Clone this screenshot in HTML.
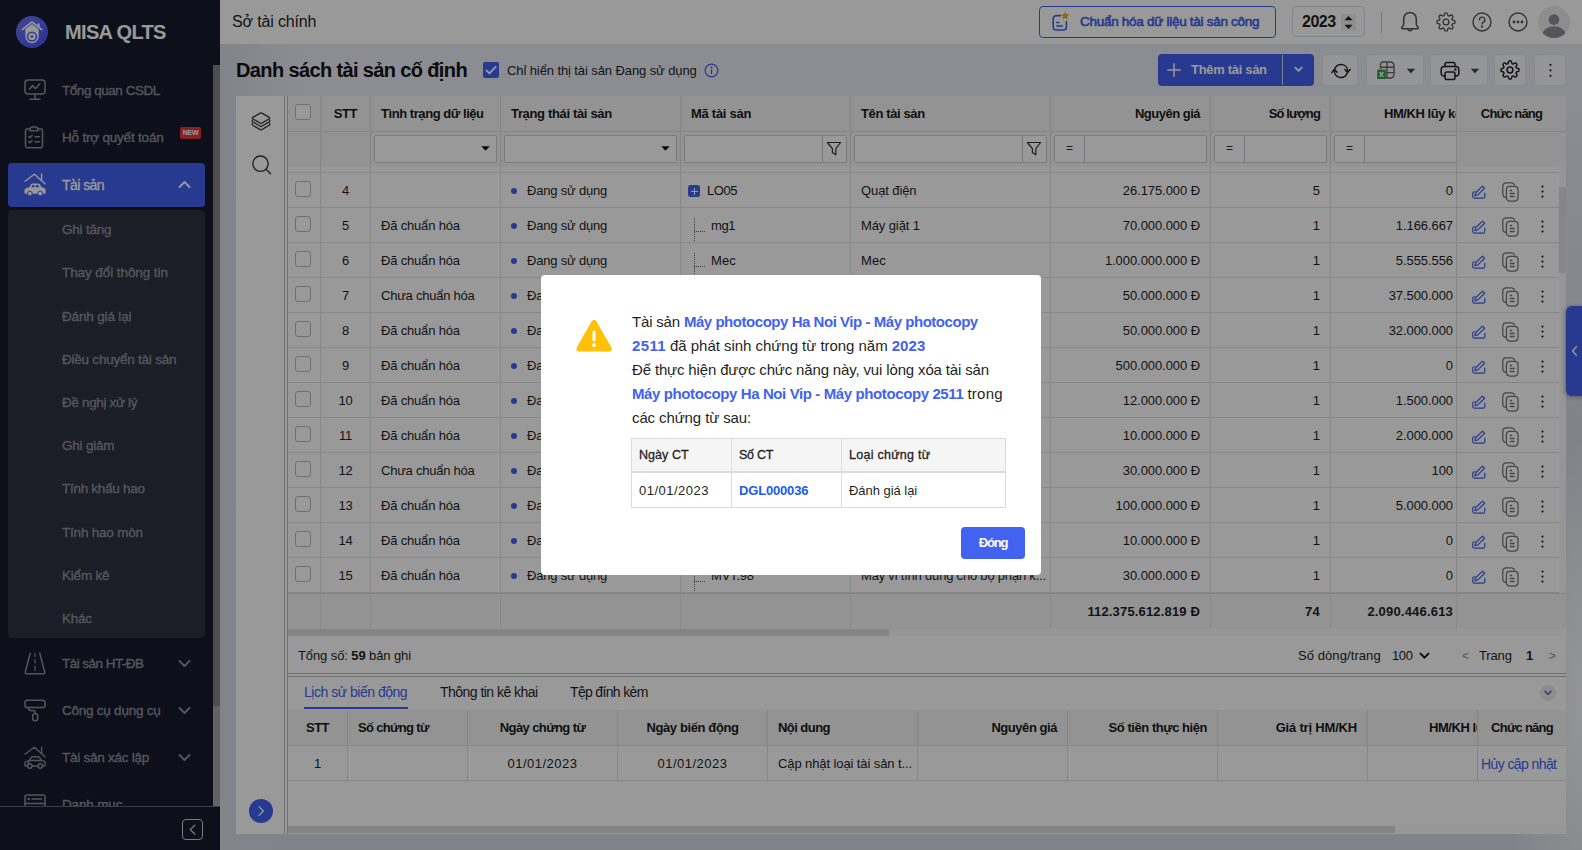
<!DOCTYPE html>
<html lang="vi">
<head>
<meta charset="utf-8">
<title>MISA QLTS - Danh sách tài sản cố định</title>
<style>
*{box-sizing:border-box;margin:0;padding:0}
html,body{width:1582px;height:850px;overflow:hidden}
body{position:relative;font-family:"Liberation Sans",Arial,sans-serif;font-size:13px;color:#1f1f1f;background:radial-gradient(ellipse 90px 260px at 1590px 700px,#fbfbfb 0,rgba(251,251,251,0) 100%),linear-gradient(to right,#d9dce6 225px,rgba(217,220,230,0) 300px),linear-gradient(to bottom,#e8ebf4 0,#e8ebf4 100px,#d7dbe5 420px)}
.abs{position:absolute}
svg{display:block;overflow:visible}
.nw{white-space:nowrap}
b,.b{font-weight:700}
.md{-webkit-text-stroke:.3px currentColor}
/* ---------- sidebar ---------- */
#sb{position:absolute;left:0;top:0;width:220px;height:850px;background:#161a2d;overflow:hidden}
#sb .logo{position:absolute;left:16px;top:16px;width:32px;height:32px;border-radius:50%;background:linear-gradient(140deg,#6b79f2,#4a4eff)}
#sb .brand{position:absolute;left:65px;top:20px;font-size:20px;font-weight:700;color:#fff;letter-spacing:-.7px;line-height:24px;white-space:nowrap}
.mi{position:absolute;left:8px;width:197px;height:44px;border-radius:4px;color:#8e909b;font-size:13.5px;white-space:nowrap}
.mi .t{position:absolute;left:54px;top:15px;line-height:16px;letter-spacing:-.5px;-webkit-text-stroke:.35px currentColor}
.mi .ic{position:absolute;left:15px;top:10px;width:24px;height:24px}
.mi .ar{position:absolute;left:170px;top:18px;width:13px;height:9px}
.mi.act{background:#4262f0;color:#fff}
#sub{position:absolute;left:8px;top:210px;width:197px;height:428px;background:#2e3142;border-radius:4px}
.si{position:absolute;left:62px;font-size:13.5px;color:#8e909b;line-height:16px;white-space:nowrap;letter-spacing:-.5px;-webkit-text-stroke:.35px currentColor}
#sbscroll{position:absolute;left:213px;top:65px;width:7px;height:741px;background:#a6a6a6}
#sbscroll i{position:absolute;left:0;top:0;width:7px;height:641px;background:#828282}
#sbfoot{position:absolute;left:0;top:806px;width:220px;height:44px;background:#161a2d;border-top:1px solid #62667a}
#sbfoot .cb{position:absolute;left:182px;top:12px;width:21px;height:21px;border:1px solid #cfcfcf;border-radius:4px}
.new{position:absolute;left:172px;top:12px;width:21px;height:12px;border-radius:2px;background:#e8353d;color:#fff;font-size:7px;font-weight:700;line-height:12px;text-align:center;letter-spacing:-.2px}
/* ---------- header ---------- */
#hd{position:absolute;left:220px;top:0;width:1362px;height:44px;background:#fff}
#hd .org{position:absolute;left:12px;top:12px;font-size:16px;line-height:20px;white-space:nowrap;letter-spacing:-.3px}
#hd .std{position:absolute;left:819px;top:6px;width:237px;height:32px;border:1px solid #4262f0;border-radius:4px;color:#4262f0;font-weight:400;font-size:13.5px;-webkit-text-stroke:.6px #4262f0}
#hd .std>span{position:absolute;left:40px;top:7px;line-height:16px;white-space:nowrap;letter-spacing:-.95px}
#hd .yr{position:absolute;left:1072px;top:6px;width:73px;height:31px;border:1px solid #dadce8;border-radius:4px;background:#fff}
#hd .yr>span{position:absolute;left:9px;top:6px;font-size:16px;font-weight:700;line-height:18px;letter-spacing:-.4px}
#hd .yr i{position:absolute;left:48px;top:7px;width:15px;height:17px;background:#efefef}
#hd .sep{position:absolute;left:1161px;top:12px;width:1px;height:21px;background:#c4c4c4}
/* ---------- toolbar ---------- */
#ttl{position:absolute;left:236px;top:58px;font-size:20px;font-weight:700;line-height:24px;white-space:nowrap;color:#111}
#chk{position:absolute;left:483px;top:62px;width:16px;height:16px;border-radius:2px;background:#4262f0}
#chkl{position:absolute;left:507px;top:63px;line-height:15px;white-space:nowrap;letter-spacing:-.2px;font-size:13px}
.tb{position:absolute;top:54px;height:32px;border-radius:4px;background:#f8f9fc;border:1px solid #e3e5ec}
#add{position:absolute;left:1158px;top:54px;width:156px;height:32px;border-radius:4px;background:#4262f0;color:#fff}
#add>span{position:absolute;left:33px;top:8px;font-weight:700;font-size:13px;line-height:16px;white-space:nowrap;letter-spacing:-.35px}
#add i{position:absolute;left:124px;top:1px;width:1px;height:30px;background:#cfd6f5}
/* ---------- left panel ---------- */
#lp{position:absolute;left:236px;top:96px;width:48px;height:738px;background:#fff}
#sp1{position:absolute;left:284px;top:96px;width:4px;height:738px;background:#fff;border-left:1px solid #bdbdbd;border-right:1px solid #bdbdbd}
/* ---------- grid ---------- */
#g{position:absolute;left:288px;top:96px;width:1278px;height:738px;background:#fff;overflow:hidden}
.hc{position:absolute;top:0;height:36px;line-height:35px;font-weight:700;padding:0 10px;border-right:1px solid #e0e0e0;border-bottom:1px solid #e0e0e0;white-space:nowrap;overflow:hidden;letter-spacing:-.45px;color:#1a1a1a}
.fc{position:absolute;top:36px;height:35px;border-right:1px solid #e0e0e0}
.fi{position:absolute;top:3px;height:28px;border:1px solid #cdcdcd;border-radius:1.5px;background:#fff}
.r{position:absolute;left:0;width:1271px;height:35px;border-bottom:1px solid #e3e3e3}
.c{position:absolute;top:0;height:34px;line-height:35px;padding:0 10px;border-right:1px solid #e3e3e3;white-space:nowrap;overflow:hidden;letter-spacing:-.2px}
.c.rt{text-align:right;padding-right:10px;letter-spacing:-.07px}
.c.ct{text-align:center;padding:0}
.cb16{position:absolute;left:7px;top:8px;width:16px;height:16px;border:1px solid #b9b9b9;border-radius:3px;background:#fff}
.dot{position:absolute;left:10px;top:15px;width:6px;height:6px;border-radius:50%;background:#4262f0}
.tv{position:absolute;left:13px;top:10px;width:0;height:25px;border-left:1px dotted #666}
.th{position:absolute;left:13px;top:23px;width:11px;height:0;border-top:1px dotted #666}
</style>
<style>
.plus{position:absolute;left:7px;top:12px;width:12px;height:12px;border-radius:2.5px;background:#4262f0}
.plus:before{content:"";position:absolute;left:2.5px;top:5.5px;width:7px;height:1px;background:#fff}
.plus:after{content:"";position:absolute;left:5.5px;top:2.5px;width:1px;height:7px;background:#fff}
#modal{position:absolute;left:541px;top:275px;width:500px;height:300px;background:#fff;border-radius:4px}
#modal .msg{position:absolute;left:91px;top:35px;font-size:15px;color:#1f1f1f}
#modal .ln{height:24px;line-height:24px;white-space:nowrap;letter-spacing:-.2px}
#modal .ln b{color:#4262f0}
#modal .mt{position:absolute;left:90px;top:163px;width:375px;height:70px;border:1px solid #d9dbe4;}
.mh{position:absolute;top:0;height:34px;line-height:33px;background:#f5f5f5;border-right:1px solid #dfe0e6;border-bottom:2px solid #d9dbe4;padding-left:7px;font-size:12.5px;white-space:nowrap;-webkit-text-stroke:.3px #1f1f1f;letter-spacing:-.2px}
.mc{position:absolute;top:34px;height:34px;line-height:35px;border-right:1px solid #d9dbe4;padding-left:7px;font-size:13px;white-space:nowrap;letter-spacing:-.1px}
#modal .close{position:absolute;left:420px;top:252px;width:64px;height:32px;border-radius:4px;background:#4262f0;color:#fff;font-weight:700;font-size:13px;line-height:32px;text-align:center;letter-spacing:-.6px}
</style>
</head>
<body>
<!-- ================= SIDEBAR ================= -->
<div id="sb">
  <div class="logo">
    <svg width="32" height="32" viewBox="0 0 32 32">
      <path d="M6.3 13.6 L16 5.8 L25.7 13.6" fill="none" stroke="#fff" stroke-width="1.7" stroke-linecap="round" stroke-linejoin="round"/>
      <path d="M21.4 7.6h2.2v3.6l-2.2-1.8z" fill="#fff"/>
      <path d="M9.3 13.2 L16 8 L22.7 13.2 V20.5 A6.7 6.7 0 0 1 9.3 20.5 Z" fill="#fff"/>
      <circle cx="16" cy="20.6" r="5.2" fill="#5560f0"/>
      <circle cx="16" cy="20.6" r="3.7" fill="#fff"/>
      <circle cx="16" cy="20.6" r="1.4" fill="#5560f0"/>
    </svg>
  </div>
  <div class="brand"><span style="letter-spacing:-0.66px">MISA QLTS</span></div>

  <div class="mi" style="top:68px">
    <svg class="abs" style="left:16px;top:11px" width="22" height="22" viewBox="0 0 22 22" fill="none" stroke="#8e909b" stroke-width="1.5" stroke-linecap="round" stroke-linejoin="round">
      <rect x="1" y="1" width="20" height="14" rx="3"/><path d="M11 15v5M6 20.3h10"/><path d="M5.4 10.2l3.2-3.6 2.900000000000001 3.1 4.3-4.9" stroke-width="1.6"/>
    </svg>
    <span class="t"><span style="letter-spacing:-0.46px">Tổng quan CSDL</span></span>
  </div>

  <div class="mi" style="top:115px">
    <svg class="abs" style="left:16px;top:10px" width="20" height="24" viewBox="0 0 20 24" fill="none" stroke="#8e909b" stroke-width="1.5" stroke-linecap="round" stroke-linejoin="round">
      <path d="M6 4H3.2A1.7 1.7 0 0 0 1.5 5.700000000000001V21A1.7 1.7 0 0 0 3.2 22.7H16.8A1.7 1.7 0 0 0 18.5 21V5.7A1.7 1.7 0 0 0 16.8 4H14"/>
      <path d="M6 5.800000000000001V3.6a1 1 0 0 1 1-1h1.3a1.8 1.8 0 0 1 3.4 0H13a1 1 0 0 1 1 1v2.2z"/>
      <path d="M4.800000000000001 11.6l1.2 1.2 2-2.2M11 11.8h4.5M4.8 16.6l1.2 1.2 2-2.2M11 16.8h4.5"/>
    </svg>
    <span class="t"><span style="letter-spacing:-0.20px">Hỗ trợ quyết toán</span></span>
    <span class="new">NEW</span>
  </div>

  <div class="mi act" style="top:163px">
    <svg class="abs" style="left:16px;top:10px" width="22" height="24" viewBox="0 0 22 24">
      <path d="M1 8.2 L10.4 1.2 L21 10.8" fill="none" stroke="#fff" stroke-width="1.4" stroke-linecap="round" stroke-linejoin="round"/>
      <path d="M17.6 1.2V7" fill="none" stroke="#fff" stroke-width="1.4" stroke-linecap="round"/>
      <path d="M5.2 14.6 L7 11.4 Q7.5 10.5 8.6 10.5 H14 Q15.2 10.5 15.900000000000002 11.5 L17.8 14.3 Q21.6 14.8 21.6 17.4 V19.6 Q21.6 20.8 20.4 20.8 H1.7 Q0.5 20.8 0.5 19.6 V17.6 Q0.5 15 5.2 14.6 Z" fill="#fff"/>
      <circle cx="5.8" cy="20.6" r="2.4" fill="#fff" stroke="#4262f0" stroke-width="1"/>
      <circle cx="16.2" cy="20.6" r="2.4" fill="#fff" stroke="#4262f0" stroke-width="1"/>
      <path d="M7.3 14.3l1.2-2.2h2v2.2zM11.8 12.1h2.2l1.6 2.2h-3.8z" fill="#4262f0"/>
    </svg>
    <span class="t" style="top:14px;font-size:14px;-webkit-text-stroke:.3px currentColor"><span style="letter-spacing:-0.55px">Tài sản</span></span>
    <svg class="ar" style="top:17px" viewBox="0 0 13 9" fill="none" stroke="#fff" stroke-width="1.9" stroke-linecap="round" stroke-linejoin="round"><path d="M1.5 7L6.5 2l5 5"/></svg>
  </div>

  <div id="sub"></div>
  <div class="si" style="top:222px"><span style="letter-spacing:-0.22px">Ghi tăng</span></div>
  <div class="si" style="top:265px"><span style="letter-spacing:-0.08px">Thay đổi thông tin</span></div>
  <div class="si" style="top:309px"><span style="letter-spacing:-0.16px">Đánh giá lại</span></div>
  <div class="si" style="top:352px"><span style="letter-spacing:-0.23px">Điều chuyển tài sản</span></div>
  <div class="si" style="top:395px"><span style="letter-spacing:-0.34px">Đề nghị xử lý</span></div>
  <div class="si" style="top:438px"><span style="letter-spacing:-0.22px">Ghi giảm</span></div>
  <div class="si" style="top:481px"><span style="letter-spacing:-0.28px">Tính khấu hao</span></div>
  <div class="si" style="top:525px"><span style="letter-spacing:-0.21px">Tính hao mòn</span></div>
  <div class="si" style="top:568px"><span style="letter-spacing:-0.21px">Kiểm kê</span></div>
  <div class="si" style="top:611px"><span style="letter-spacing:-0.26px">Khác</span></div>

  <div class="mi" style="top:641px">
    <svg class="abs" style="left:16px;top:11px" width="22" height="23" viewBox="0 0 22 23" fill="none" stroke="#8e909b" stroke-width="1.5" stroke-linecap="round" stroke-linejoin="round">
      <path d="M6.2 1.2 L1.4 19.6 Q1 21.8 2.6 21.8 H19.4 Q21 21.8 20.6 19.6 L15.8 1.2"/>
      <path d="M11 1.5v3M11 7.5v3.600000000000001M11 14.2v4.2" stroke-width="1.2"/>
    </svg>
    <span class="t"><span style="letter-spacing:-0.54px">Tài sản HT-ĐB</span></span>
    <svg class="ar" viewBox="0 0 13 9" fill="none" stroke="#8e909b" stroke-width="1.9" stroke-linecap="round" stroke-linejoin="round"><path d="M1.5 2l5 5 5-5"/></svg>
  </div>

  <div class="mi" style="top:688px">
    <svg class="abs" style="left:16px;top:11px" width="22" height="23" viewBox="0 0 22 23" fill="none" stroke="#8e909b" stroke-width="1.5" stroke-linecap="round" stroke-linejoin="round">
      <rect x="1" y="1.2" width="20" height="7.4" rx="2.4"/>
      <path d="M4.2 8.8 Q4.4 11.4 7 11.6 L10 11.8 Q11.2 12 11.2 13.2 V14.6"/>
      <rect x="8.7" y="14.8" width="5" height="7" rx="2.2"/>
    </svg>
    <span class="t"><span style="letter-spacing:-0.24px">Công cụ dụng cụ</span></span>
    <svg class="ar" viewBox="0 0 13 9" fill="none" stroke="#8e909b" stroke-width="1.9" stroke-linecap="round" stroke-linejoin="round"><path d="M1.5 2l5 5 5-5"/></svg>
  </div>

  <div class="mi" style="top:735px">
    <svg class="abs" style="left:16px;top:11px" width="22" height="24" viewBox="0 0 22 24" fill="none" stroke="#8e909b" stroke-width="1.4" stroke-linecap="round" stroke-linejoin="round">
      <path d="M1 8.2 L10.4 1.2 L21 10.8M17.6 1.2V7"/>
      <path d="M5.2 14.6 L7 11.6 Q7.5 10.7 8.6 10.7 H13.8 Q15 10.7 15.7 11.7 L17.6 14.4 Q21.2 14.9 21.2 17.4 V19 Q21.2 20 20.2 20 H18.6M13.8 20H8.2M3.4 20H1.9 Q0.9 20 0.9 19 V17.6 Q0.9 15.1 5.2 14.6 Z"/>
      <path d="M5.6 14.5H17.4"/>
      <circle cx="5.8" cy="20" r="2.2"/><circle cx="16.2" cy="20" r="2.2"/>
    </svg>
    <span class="t"><span style="letter-spacing:-0.26px">Tài sản xác lập</span></span>
    <svg class="ar" viewBox="0 0 13 9" fill="none" stroke="#8e909b" stroke-width="1.9" stroke-linecap="round" stroke-linejoin="round"><path d="M1.5 2l5 5 5-5"/></svg>
  </div>

  <div class="mi" style="top:782px">
    <svg class="abs" style="left:16px;top:12px" width="22" height="20" viewBox="0 0 22 20" fill="none" stroke="#8e909b" stroke-width="1.5" stroke-linecap="round" stroke-linejoin="round">
      <rect x="1" y="1" width="20" height="17" rx="2"/><path d="M1 9.5h20"/><path d="M8 5h9.5"/><circle cx="4.6" cy="5" r=".6" fill="#8e909b"/>
    </svg>
    <span class="t"><span style="letter-spacing:-0.15px">Danh mục</span></span>
  </div>

  <div id="sbscroll"><i></i></div>
  <div id="sbfoot"><div class="cb"><svg width="19" height="19" viewBox="0 0 19 19" fill="none" stroke="#cfcfcf" stroke-width="1.3" stroke-linecap="round" stroke-linejoin="round"><path d="M11.8 5.2L7.2 9.6l4.6 4.400000000000001"/></svg></div></div>
</div>
<!-- ================= HEADER ================= -->
<div id="hd">
  <div class="org"><span style="letter-spacing:-0.15px">Sở tài chính</span></div>
  <div class="std">
    <svg class="abs" style="left:11px;top:4px" width="20" height="22" viewBox="0 0 20 22" fill="none" stroke="#4262f0" stroke-width="1.6" stroke-linecap="round" stroke-linejoin="round">
      <path d="M9.5 4.6H5.2A3 3 0 0 0 2.2 7.6V16A3 3 0 0 0 5.2 19H12.4A3 3 0 0 0 15.4 16V10.5"/>
      <path d="M5.8 11.5h2M5.8 15h5.6"/>
      <path d="M14.2 0.6l1.25 2.6 2.85.4-2.05 2 .5 2.85-2.55-1.35-2.55 1.35.5-2.85-2.05-2 2.85-.4z" fill="#f5a623" stroke="none"/>
    </svg>
    <span><span style="letter-spacing:-0.28px">Chuẩn hóa dữ liệu tài sản công</span></span>
  </div>
  <div class="yr"><span><span style="letter-spacing:-0.50px">2023</span></span><i></i>
    <svg class="abs" style="left:50px;top:8px" width="11" height="15" viewBox="0 0 9 13"><path d="M1 4.5L4.5 .8 8 4.5zM1 8.5L4.5 12.2 8 8.5z" fill="#222"/></svg>
  </div>
  <div class="sep"></div>
  <!-- bell -->
  <svg class="abs" style="left:1180px;top:11px" width="20" height="23" viewBox="0 0 20 23" fill="none" stroke="#555" stroke-width="1.5" stroke-linecap="round" stroke-linejoin="round">
    <path d="M10 1.5c-3.700000000000001 0-6.300000000000001 2.8-6.300000000000001 6.5v5.2c0 1.2-.6 2.100000000000001-1.6 2.900000000000001-.7.6-.3 1.7.6 1.7h14.600000000000001c.9 0 1.3-1.1.6-1.7-1-.8-1.6-1.7-1.6-2.900000000000001V8c0-3.700000000000001-2.600000000000001-6.5-6.300000000000001-6.5z"/>
    <path d="M7.8 18.2a2.3 2.3 0 0 0 4.4 0"/>
  </svg>
  <!-- gear -->
  <svg class="abs" style="left:1216px;top:12px" width="20" height="20" viewBox="0 0 24 24" fill="none" stroke="#555" stroke-width="1.6" stroke-linecap="round" stroke-linejoin="round">
    <circle cx="12" cy="12" r="3.5"/>
    <path d="M19.4 15a1.65 1.65 0 0 0 .33 1.82l.06.06a2 2 0 1 1-2.830000000000001 2.830000000000001l-.06-.06a1.65 1.65 0 0 0-1.82-.33 1.65 1.65 0 0 0-1 1.51V21a2 2 0 1 1-4 0v-.09A1.65 1.65 0 0 0 9 19.4a1.65 1.65 0 0 0-1.82.33l-.06.06a2 2 0 1 1-2.830000000000001-2.830000000000001l.06-.06a1.65 1.65 0 0 0 .33-1.82 1.65 1.65 0 0 0-1.51-1H3a2 2 0 1 1 0-4h.09A1.65 1.65 0 0 0 4.6 9a1.65 1.65 0 0 0-.33-1.82l-.06-.06a2 2 0 1 1 2.830000000000001-2.830000000000001l.06.06a1.65 1.65 0 0 0 1.82.33H9a1.65 1.65 0 0 0 1-1.51V3a2 2 0 1 1 4 0v.09a1.65 1.65 0 0 0 1 1.51 1.65 1.65 0 0 0 1.82-.33l.06-.06a2 2 0 1 1 2.830000000000001 2.830000000000001l-.06.06a1.65 1.65 0 0 0-.33 1.82V9a1.65 1.65 0 0 0 1.51 1H21a2 2 0 1 1 0 4h-.09a1.65 1.65 0 0 0-1.51 1z"/>
  </svg>
  <!-- help -->
  <svg class="abs" style="left:1252px;top:12px" width="20" height="20" viewBox="0 0 20 20" fill="none" stroke="#555" stroke-width="1.4" stroke-linecap="round" stroke-linejoin="round">
    <circle cx="10" cy="10" r="9"/><path d="M7.4 7.800000000000001a2.7 2.7 0 1 1 3.8 2.5c-.8.4-1.2.9-1.2 1.8"/><circle cx="10" cy="14.6" r=".5" fill="#555"/>
  </svg>
  <!-- more -->
  <svg class="abs" style="left:1288px;top:12px" width="20" height="20" viewBox="0 0 20 20" fill="none" stroke="#555" stroke-width="1.4">
    <circle cx="10" cy="10" r="9"/><circle cx="6" cy="10" r=".7" fill="#555"/><circle cx="10" cy="10" r=".7" fill="#555"/><circle cx="14" cy="10" r=".7" fill="#555"/>
  </svg>
  <!-- avatar -->
  <svg class="abs" style="left:1318px;top:6px" width="32" height="32" viewBox="0 0 32 32">
    <defs><clipPath id="avc"><circle cx="16" cy="16" r="16"/></clipPath></defs>
    <circle cx="16" cy="16" r="16" fill="#ececec"/>
    <g clip-path="url(#avc)" fill="#8e8e96"><circle cx="16" cy="13.6" r="5.3"/><ellipse cx="16" cy="28.5" rx="11.5" ry="8.3"/></g>
  </svg>
</div>

<!-- ================= TITLE / TOOLBAR ================= -->
<div id="ttl"><span style="letter-spacing:-0.63px">Danh sách tài sản cố định</span></div>
<div id="chk"><svg width="16" height="16" viewBox="0 0 16 16" fill="none" stroke="#fff" stroke-width="1.9" stroke-linecap="round" stroke-linejoin="round"><path d="M3.4 8.4l3 3 6.2-6.6"/></svg></div>
<div id="chkl"><span style="letter-spacing:-0.10px">Chỉ hiển thị tài sản Đang sử dụng</span></div>
<svg class="abs" style="left:704px;top:63px" width="15" height="15" viewBox="0 0 15 15" fill="none" stroke="#4262f0" stroke-width="1.2" stroke-linecap="round"><circle cx="7.5" cy="7.5" r="6.4"/><path d="M7.5 6.8v3.8"/><circle cx="7.5" cy="4.5" r=".4" fill="#4262f0"/></svg>

<div id="add">
  <svg class="abs" style="left:9px;top:9px" width="14" height="14" viewBox="0 0 14 14" fill="none" stroke="#fff" stroke-width="1.5" stroke-linecap="round"><path d="M7 .8v12.4M.8 7h12.4"/></svg>
  <span><span style="letter-spacing:-0.31px">Thêm tài sản</span></span><i></i>
  <svg class="abs" style="left:136px;top:12px" width="9" height="7" viewBox="0 0 11 8" fill="none" stroke="#fff" stroke-width="2.2" stroke-linecap="round" stroke-linejoin="round"><path d="M1.6 1.8l3.9 3.9 3.9-3.9"/></svg>
</div>
<div class="tb" style="left:1322px;width:36px">
  <svg class="abs" style="left:8px;top:8px" width="20" height="16" viewBox="0 0 20 16" fill="none" stroke="#222" stroke-width="1.5" stroke-linecap="round" stroke-linejoin="round">
    <path d="M3.9 5.6A6.6 6.6 0 0 1 16.6 8.6"/><path d="M13.9 6.6l2.7 2.8 2.5-3"/>
    <path d="M16.1 10.4A6.6 6.6 0 0 1 3.4 7.4"/><path d="M.9 9.4l2.5-3 2.7 2.8"/>
  </svg>
</div>
<div class="tb" style="left:1366px;width:58px">
  <svg class="abs" style="left:10px;top:6px" width="18" height="19" viewBox="0 0 18 19" fill="none" stroke="#666" stroke-width="1.4" stroke-linejoin="round">
    <path d="M5 1h8.5A3.5 3.5 0 0 1 17 4.5v9A3.5 3.5 0 0 1 13.5 17H8M3.5 8V3.5"/>
    <path d="M3.5 6.3H17M9 11.6h8M10 1v16M3.5 3.5A2.5 2.5 0 0 1 6 1"/>
    <rect x=".2" y="8.6" width="8.6" height="9.4" fill="#2e9e4f" stroke="none"/>
    <path d="M2.6 11l3.8 4.800000000000001M6.4 11l-3.8 4.800000000000001" stroke="#fff" stroke-width="1.3"/>
  </svg>
  <svg class="abs" style="left:39px;top:13px" width="10" height="6" viewBox="0 0 10 6"><path d="M.8 .8h8.4L5 5.4z" fill="#38446e"/></svg>
</div>
<div class="tb" style="left:1430px;width:58px">
  <svg class="abs" style="left:9px;top:6px" width="20" height="20" viewBox="0 0 20 20" fill="none" stroke="#222" stroke-width="1.5" stroke-linecap="round" stroke-linejoin="round">
    <path d="M5 5.4V3.2A1.7 1.7 0 0 1 6.7 1.5h6.6A1.7 1.7 0 0 1 15 3.2v2.2"/>
    <path d="M5 15H3.6A2.4 2.4 0 0 1 1.2 12.6V8A2.6 2.6 0 0 1 3.8 5.4h12.4A2.6 2.6 0 0 1 18.8 8v4.6A2.4 2.4 0 0 1 16.4 15H15"/>
    <rect x="5" y="11" width="10" height="7.6" rx="1.8"/><circle cx="15.4" cy="8.4" r=".5" fill="#222"/>
  </svg>
  <svg class="abs" style="left:39px;top:13px" width="10" height="6" viewBox="0 0 10 6"><path d="M.8 .8h8.4L5 5.4z" fill="#38446e"/></svg>
</div>
<div class="tb" style="left:1494px;width:32px">
  <svg class="abs" style="left:5px;top:5px" width="20" height="20" viewBox="0 0 24 24" fill="none" stroke="#222" stroke-width="1.8" stroke-linecap="round" stroke-linejoin="round">
    <circle cx="12" cy="12" r="3.5"/>
    <path d="M19.4 15a1.65 1.65 0 0 0 .33 1.82l.06.06a2 2 0 1 1-2.830000000000001 2.830000000000001l-.06-.06a1.65 1.65 0 0 0-1.82-.33 1.65 1.65 0 0 0-1 1.51V21a2 2 0 1 1-4 0v-.09A1.65 1.65 0 0 0 9 19.4a1.65 1.65 0 0 0-1.82.33l-.06.06a2 2 0 1 1-2.830000000000001-2.830000000000001l.06-.06a1.65 1.65 0 0 0 .33-1.82 1.65 1.65 0 0 0-1.51-1H3a2 2 0 1 1 0-4h.09A1.65 1.65 0 0 0 4.6 9a1.65 1.65 0 0 0-.33-1.82l-.06-.06a2 2 0 1 1 2.830000000000001-2.830000000000001l.06.06a1.65 1.65 0 0 0 1.82.33H9a1.65 1.65 0 0 0 1-1.51V3a2 2 0 1 1 4 0v.09a1.65 1.65 0 0 0 1 1.51 1.65 1.65 0 0 0 1.82-.33l.06-.06a2 2 0 1 1 2.830000000000001 2.830000000000001l-.06.06a1.65 1.65 0 0 0-.33 1.82V9a1.65 1.65 0 0 0 1.51 1H21a2 2 0 1 1 0 4h-.09a1.65 1.65 0 0 0-1.51 1z"/>
  </svg>
</div>
<div class="tb" style="left:1534px;width:32px">
  <svg class="abs" style="left:14px;top:8px" width="3" height="15" viewBox="0 0 3 15" fill="#222"><circle cx="1.5" cy="1.8" r="1.1"/><circle cx="1.5" cy="7.3" r="1.1"/><circle cx="1.5" cy="12.8" r="1.1"/></svg>
</div>

<!-- ================= LEFT PANEL ================= -->
<div id="lp">
  <svg class="abs" style="left:15px;top:16px" width="20" height="20" viewBox="0 0 20 20" fill="none" stroke="#3a3a3a" stroke-width="1.3" stroke-linecap="round" stroke-linejoin="round">
    <path d="M9.2 1.1Q10 .7 10.8 1.1L18.300000000000001 5.4Q19.2 6.1 18.300000000000001 6.8L10.8 11.1Q10 11.5 9.2 11.1L1.7 6.8Q.8 6.1 1.7 5.4Z"/>
    <path d="M1.4 8.2Q.9 9.3 1.8 9.9L9.2 14.2Q10 14.6 10.8 14.2L18.2 9.9Q19.1 9.3 18.6 8.2"/>
    <path d="M1.4 11.6Q.9 12.7 1.8 13.3L9.2 17.6Q10 18 10.8 17.6L18.2 13.3Q19.1 12.7 18.6 11.6"/>
  </svg>
  <svg class="abs" style="left:15px;top:59px" width="20" height="20" viewBox="0 0 20 20" fill="none" stroke="#3a3a3a" stroke-width="1.4" stroke-linecap="round"><circle cx="9.5" cy="8.7" r="7.7"/><path d="M15 14.2l4.6 4.6"/></svg>
  <div class="abs" style="left:13px;top:703px;width:24px;height:24px;border-radius:50%;background:#4262f0">
    <svg class="abs" style="left:8px;top:6px" width="8" height="12" viewBox="0 0 8 12" fill="none" stroke="#fff" stroke-width="1.3" stroke-linecap="round" stroke-linejoin="round"><path d="M2 1.6l4.4 4.4L2 10.4"/></svg>
  </div>
</div>
<div id="sp1"></div>
<!-- ================= GRID ================= -->
<div id="g">
<div class="abs" style="left:0;top:71px;width:1271px;height:426px;overflow:hidden;background:#fff">
<div class="r" style="top:-29px">
<div class="c " style="left:0px;width:33px"><i class="cb16"></i></div>
<div class="c ct" style="left:33px;width:50px">3</div>
<div class="c " style="left:83px;width:130px"><span style="letter-spacing:-0.18px">Đã chuẩn hóa</span></div>
<div class="c " style="left:213px;width:180px"><i class="dot"></i><span style="padding-left:16px"><span style="letter-spacing:-0.19px">Đang sử dụng</span></span></div>
<div class="c " style="left:393px;width:170px"><span style="padding-left:20px"></span></div>
<div class="c " style="left:563px;width:200px"></div>
<div class="c rt" style="left:763px;width:160px"></div>
<div class="c rt" style="left:923px;width:120px"></div>
<div class="c rt" style="left:1043px;width:125px;padding-right:3px;border-right:0"></div>
</div>
<div class="r" style="top:6px">
<div class="c " style="left:0px;width:33px"><i class="cb16"></i></div>
<div class="c ct" style="left:33px;width:50px">4</div>
<div class="c " style="left:83px;width:130px"></div>
<div class="c " style="left:213px;width:180px"><i class="dot"></i><span style="padding-left:16px"><span style="letter-spacing:-0.19px">Đang sử dụng</span></span></div>
<div class="c " style="left:393px;width:170px"><i class="plus"></i><span style="padding-left:16px"><span style="letter-spacing:-0.47px">LO05</span></span></div>
<div class="c " style="left:563px;width:200px"><span style="letter-spacing:-0.10px">Quạt điện</span></div>
<div class="c rt" style="left:763px;width:160px">26.175.000 Đ</div>
<div class="c rt" style="left:923px;width:120px">5</div>
<div class="c rt" style="left:1043px;width:125px;padding-right:3px;border-right:0">0</div>
</div>
<div class="r" style="top:41px">
<div class="c " style="left:0px;width:33px"><i class="cb16"></i></div>
<div class="c ct" style="left:33px;width:50px">5</div>
<div class="c " style="left:83px;width:130px"><span style="letter-spacing:-0.18px">Đã chuẩn hóa</span></div>
<div class="c " style="left:213px;width:180px"><i class="dot"></i><span style="padding-left:16px"><span style="letter-spacing:-0.19px">Đang sử dụng</span></span></div>
<div class="c " style="left:393px;width:170px"><i class="tv"></i><i class="th"></i><span style="padding-left:20px"><span style="letter-spacing:-0.35px">mg1</span></span></div>
<div class="c " style="left:563px;width:200px"><span style="letter-spacing:-0.11px">Máy giặt 1</span></div>
<div class="c rt" style="left:763px;width:160px">70.000.000 Đ</div>
<div class="c rt" style="left:923px;width:120px">1</div>
<div class="c rt" style="left:1043px;width:125px;padding-right:3px;border-right:0">1.166.667</div>
</div>
<div class="r" style="top:76px">
<div class="c " style="left:0px;width:33px"><i class="cb16"></i></div>
<div class="c ct" style="left:33px;width:50px">6</div>
<div class="c " style="left:83px;width:130px"><span style="letter-spacing:-0.18px">Đã chuẩn hóa</span></div>
<div class="c " style="left:213px;width:180px"><i class="dot"></i><span style="padding-left:16px"><span style="letter-spacing:-0.19px">Đang sử dụng</span></span></div>
<div class="c " style="left:393px;width:170px"><i class="tv"></i><i class="th"></i><span style="padding-left:20px"><span style="letter-spacing:0.12px">Mec</span></span></div>
<div class="c " style="left:563px;width:200px"><span style="letter-spacing:0.12px">Mec</span></div>
<div class="c rt" style="left:763px;width:160px">1.000.000.000 Đ</div>
<div class="c rt" style="left:923px;width:120px">1</div>
<div class="c rt" style="left:1043px;width:125px;padding-right:3px;border-right:0">5.555.556</div>
</div>
<div class="r" style="top:111px">
<div class="c " style="left:0px;width:33px"><i class="cb16"></i></div>
<div class="c ct" style="left:33px;width:50px">7</div>
<div class="c " style="left:83px;width:130px"><span style="letter-spacing:-0.24px">Chưa chuẩn hóa</span></div>
<div class="c " style="left:213px;width:180px"><i class="dot"></i><span style="padding-left:16px"><span style="letter-spacing:-0.19px">Đang sử dụng</span></span></div>
<div class="c " style="left:393px;width:170px"><i class="tv"></i><i class="th"></i><span style="padding-left:20px">MPT2511</span></div>
<div class="c " style="left:563px;width:200px">Máy photocopy 2511</div>
<div class="c rt" style="left:763px;width:160px">50.000.000 Đ</div>
<div class="c rt" style="left:923px;width:120px">1</div>
<div class="c rt" style="left:1043px;width:125px;padding-right:3px;border-right:0">37.500.000</div>
</div>
<div class="r" style="top:146px">
<div class="c " style="left:0px;width:33px"><i class="cb16"></i></div>
<div class="c ct" style="left:33px;width:50px">8</div>
<div class="c " style="left:83px;width:130px"><span style="letter-spacing:-0.18px">Đã chuẩn hóa</span></div>
<div class="c " style="left:213px;width:180px"><i class="dot"></i><span style="padding-left:16px"><span style="letter-spacing:-0.19px">Đang sử dụng</span></span></div>
<div class="c " style="left:393px;width:170px"><i class="tv"></i><i class="th"></i><span style="padding-left:20px">MPT.01</span></div>
<div class="c " style="left:563px;width:200px">Máy photocopy Ha Noi Vip</div>
<div class="c rt" style="left:763px;width:160px">50.000.000 Đ</div>
<div class="c rt" style="left:923px;width:120px">1</div>
<div class="c rt" style="left:1043px;width:125px;padding-right:3px;border-right:0">32.000.000</div>
</div>
<div class="r" style="top:181px">
<div class="c " style="left:0px;width:33px"><i class="cb16"></i></div>
<div class="c ct" style="left:33px;width:50px">9</div>
<div class="c " style="left:83px;width:130px"><span style="letter-spacing:-0.18px">Đã chuẩn hóa</span></div>
<div class="c " style="left:213px;width:180px"><i class="dot"></i><span style="padding-left:16px"><span style="letter-spacing:-0.19px">Đang sử dụng</span></span></div>
<div class="c " style="left:393px;width:170px"><i class="tv"></i><i class="th"></i><span style="padding-left:20px">OTO.05</span></div>
<div class="c " style="left:563px;width:200px">Xe ô tô 7 chỗ</div>
<div class="c rt" style="left:763px;width:160px">500.000.000 Đ</div>
<div class="c rt" style="left:923px;width:120px">1</div>
<div class="c rt" style="left:1043px;width:125px;padding-right:3px;border-right:0">0</div>
</div>
<div class="r" style="top:216px">
<div class="c " style="left:0px;width:33px"><i class="cb16"></i></div>
<div class="c ct" style="left:33px;width:50px">10</div>
<div class="c " style="left:83px;width:130px"><span style="letter-spacing:-0.18px">Đã chuẩn hóa</span></div>
<div class="c " style="left:213px;width:180px"><i class="dot"></i><span style="padding-left:16px"><span style="letter-spacing:-0.19px">Đang sử dụng</span></span></div>
<div class="c " style="left:393px;width:170px"><i class="tv"></i><i class="th"></i><span style="padding-left:20px">MVT.12</span></div>
<div class="c " style="left:563px;width:200px">Máy vi tính để bàn</div>
<div class="c rt" style="left:763px;width:160px">12.000.000 Đ</div>
<div class="c rt" style="left:923px;width:120px">1</div>
<div class="c rt" style="left:1043px;width:125px;padding-right:3px;border-right:0">1.500.000</div>
</div>
<div class="r" style="top:251px">
<div class="c " style="left:0px;width:33px"><i class="cb16"></i></div>
<div class="c ct" style="left:33px;width:50px">11</div>
<div class="c " style="left:83px;width:130px"><span style="letter-spacing:-0.18px">Đã chuẩn hóa</span></div>
<div class="c " style="left:213px;width:180px"><i class="dot"></i><span style="padding-left:16px"><span style="letter-spacing:-0.19px">Đang sử dụng</span></span></div>
<div class="c " style="left:393px;width:170px"><i class="tv"></i><i class="th"></i><span style="padding-left:20px">MVT.15</span></div>
<div class="c " style="left:563px;width:200px">Máy in laser</div>
<div class="c rt" style="left:763px;width:160px">10.000.000 Đ</div>
<div class="c rt" style="left:923px;width:120px">1</div>
<div class="c rt" style="left:1043px;width:125px;padding-right:3px;border-right:0">2.000.000</div>
</div>
<div class="r" style="top:286px">
<div class="c " style="left:0px;width:33px"><i class="cb16"></i></div>
<div class="c ct" style="left:33px;width:50px">12</div>
<div class="c " style="left:83px;width:130px"><span style="letter-spacing:-0.24px">Chưa chuẩn hóa</span></div>
<div class="c " style="left:213px;width:180px"><i class="dot"></i><span style="padding-left:16px"><span style="letter-spacing:-0.19px">Đang sử dụng</span></span></div>
<div class="c " style="left:393px;width:170px"><i class="tv"></i><i class="th"></i><span style="padding-left:20px">MVT.33</span></div>
<div class="c " style="left:563px;width:200px">Máy chiếu</div>
<div class="c rt" style="left:763px;width:160px">30.000.000 Đ</div>
<div class="c rt" style="left:923px;width:120px">1</div>
<div class="c rt" style="left:1043px;width:125px;padding-right:3px;border-right:0">100</div>
</div>
<div class="r" style="top:321px">
<div class="c " style="left:0px;width:33px"><i class="cb16"></i></div>
<div class="c ct" style="left:33px;width:50px">13</div>
<div class="c " style="left:83px;width:130px"><span style="letter-spacing:-0.18px">Đã chuẩn hóa</span></div>
<div class="c " style="left:213px;width:180px"><i class="dot"></i><span style="padding-left:16px"><span style="letter-spacing:-0.19px">Đang sử dụng</span></span></div>
<div class="c " style="left:393px;width:170px"><i class="tv"></i><i class="th"></i><span style="padding-left:20px">MVT.47</span></div>
<div class="c " style="left:563px;width:200px">Máy điều hòa</div>
<div class="c rt" style="left:763px;width:160px">100.000.000 Đ</div>
<div class="c rt" style="left:923px;width:120px">1</div>
<div class="c rt" style="left:1043px;width:125px;padding-right:3px;border-right:0">5.000.000</div>
</div>
<div class="r" style="top:356px">
<div class="c " style="left:0px;width:33px"><i class="cb16"></i></div>
<div class="c ct" style="left:33px;width:50px">14</div>
<div class="c " style="left:83px;width:130px"><span style="letter-spacing:-0.18px">Đã chuẩn hóa</span></div>
<div class="c " style="left:213px;width:180px"><i class="dot"></i><span style="padding-left:16px"><span style="letter-spacing:-0.19px">Đang sử dụng</span></span></div>
<div class="c " style="left:393px;width:170px"><i class="tv"></i><i class="th"></i><span style="padding-left:20px">MVT.76</span></div>
<div class="c " style="left:563px;width:200px">Máy quét</div>
<div class="c rt" style="left:763px;width:160px">10.000.000 Đ</div>
<div class="c rt" style="left:923px;width:120px">1</div>
<div class="c rt" style="left:1043px;width:125px;padding-right:3px;border-right:0">0</div>
</div>
<div class="r" style="top:391px">
<div class="c " style="left:0px;width:33px"><i class="cb16"></i></div>
<div class="c ct" style="left:33px;width:50px">15</div>
<div class="c " style="left:83px;width:130px"><span style="letter-spacing:-0.18px">Đã chuẩn hóa</span></div>
<div class="c " style="left:213px;width:180px"><i class="dot"></i><span style="padding-left:16px"><span style="letter-spacing:-0.19px">Đang sử dụng</span></span></div>
<div class="c " style="left:393px;width:170px"><i class="tv"></i><i class="th"></i><span style="padding-left:20px">MVT.98</span></div>
<div class="c " style="left:563px;width:200px">Máy vi tính dùng cho bộ phận k...</div>
<div class="c rt" style="left:763px;width:160px">30.000.000 Đ</div>
<div class="c rt" style="left:923px;width:120px">1</div>
<div class="c rt" style="left:1043px;width:125px;padding-right:3px;border-right:0">0</div>
</div>
</div>
<div class="abs" style="left:1168px;top:71px;width:103px;height:426px;overflow:hidden;background:#fff;border-left:1px solid #dedede">
<div class="abs" style="left:0;top:-29px;width:103px;height:35px;border-bottom:1px solid #dedede"><svg class="abs" style="left:15px;top:12px" width="14" height="14" viewBox="0 0 15 15" fill="none" stroke="#4262f0" stroke-width="1.25" stroke-linecap="round" stroke-linejoin="round"><path d="M11.2 1.2l2.3 2.3-7.3 7.1-3 .8.7-3.1z"/><path d="M3.2 7.2H2.6A1.8 1.8 0 0 0 .8 9v3.2A1.8 1.8 0 0 0 2.6 14h9.3a1.8 1.8 0 0 0 1.8-1.8V8.6"/></svg><svg class="abs" style="left:45px;top:9px" width="17" height="20" viewBox="0 0 17 20" fill="none" stroke="#757575" stroke-width="1.25" stroke-linecap="round" stroke-linejoin="round"><path d="M4.4 15.4H4A3.2 3.2 0 0 1 .8 12.2V4A3.2 3.2 0 0 1 4 .8h5.6a3.2 3.2 0 0 1 3 2.2"/><rect x="4.4" y="4.4" width="11.6" height="14.6" rx="3.4"/><path d="M7.8 8.6h2.4M7.8 11.5h4.800000000000001M7.8 14.4h4.800000000000001" stroke-width="1.5" stroke-linecap="butt"/></svg><svg class="abs" style="left:84px;top:12px" width="3" height="13" viewBox="0 0 3 13" fill="#1f1f1f"><circle cx="1.5" cy="1.6" r="1.05"/><circle cx="1.5" cy="6.6" r="1.05"/><circle cx="1.5" cy="11.6" r="1.05"/></svg></div>
<div class="abs" style="left:0;top:6px;width:103px;height:35px;border-bottom:1px solid #dedede"><svg class="abs" style="left:15px;top:12px" width="14" height="14" viewBox="0 0 15 15" fill="none" stroke="#4262f0" stroke-width="1.25" stroke-linecap="round" stroke-linejoin="round"><path d="M11.2 1.2l2.3 2.3-7.3 7.1-3 .8.7-3.1z"/><path d="M3.2 7.2H2.6A1.8 1.8 0 0 0 .8 9v3.2A1.8 1.8 0 0 0 2.6 14h9.3a1.8 1.8 0 0 0 1.8-1.8V8.6"/></svg><svg class="abs" style="left:45px;top:9px" width="17" height="20" viewBox="0 0 17 20" fill="none" stroke="#757575" stroke-width="1.25" stroke-linecap="round" stroke-linejoin="round"><path d="M4.4 15.4H4A3.2 3.2 0 0 1 .8 12.2V4A3.2 3.2 0 0 1 4 .8h5.6a3.2 3.2 0 0 1 3 2.2"/><rect x="4.4" y="4.4" width="11.6" height="14.6" rx="3.4"/><path d="M7.8 8.6h2.4M7.8 11.5h4.800000000000001M7.8 14.4h4.800000000000001" stroke-width="1.5" stroke-linecap="butt"/></svg><svg class="abs" style="left:84px;top:12px" width="3" height="13" viewBox="0 0 3 13" fill="#1f1f1f"><circle cx="1.5" cy="1.6" r="1.05"/><circle cx="1.5" cy="6.6" r="1.05"/><circle cx="1.5" cy="11.6" r="1.05"/></svg></div>
<div class="abs" style="left:0;top:41px;width:103px;height:35px;border-bottom:1px solid #dedede"><svg class="abs" style="left:15px;top:12px" width="14" height="14" viewBox="0 0 15 15" fill="none" stroke="#4262f0" stroke-width="1.25" stroke-linecap="round" stroke-linejoin="round"><path d="M11.2 1.2l2.3 2.3-7.3 7.1-3 .8.7-3.1z"/><path d="M3.2 7.2H2.6A1.8 1.8 0 0 0 .8 9v3.2A1.8 1.8 0 0 0 2.6 14h9.3a1.8 1.8 0 0 0 1.8-1.8V8.6"/></svg><svg class="abs" style="left:45px;top:9px" width="17" height="20" viewBox="0 0 17 20" fill="none" stroke="#757575" stroke-width="1.25" stroke-linecap="round" stroke-linejoin="round"><path d="M4.4 15.4H4A3.2 3.2 0 0 1 .8 12.2V4A3.2 3.2 0 0 1 4 .8h5.6a3.2 3.2 0 0 1 3 2.2"/><rect x="4.4" y="4.4" width="11.6" height="14.6" rx="3.4"/><path d="M7.8 8.6h2.4M7.8 11.5h4.800000000000001M7.8 14.4h4.800000000000001" stroke-width="1.5" stroke-linecap="butt"/></svg><svg class="abs" style="left:84px;top:12px" width="3" height="13" viewBox="0 0 3 13" fill="#1f1f1f"><circle cx="1.5" cy="1.6" r="1.05"/><circle cx="1.5" cy="6.6" r="1.05"/><circle cx="1.5" cy="11.6" r="1.05"/></svg></div>
<div class="abs" style="left:0;top:76px;width:103px;height:35px;border-bottom:1px solid #dedede"><svg class="abs" style="left:15px;top:12px" width="14" height="14" viewBox="0 0 15 15" fill="none" stroke="#4262f0" stroke-width="1.25" stroke-linecap="round" stroke-linejoin="round"><path d="M11.2 1.2l2.3 2.3-7.3 7.1-3 .8.7-3.1z"/><path d="M3.2 7.2H2.6A1.8 1.8 0 0 0 .8 9v3.2A1.8 1.8 0 0 0 2.6 14h9.3a1.8 1.8 0 0 0 1.8-1.8V8.6"/></svg><svg class="abs" style="left:45px;top:9px" width="17" height="20" viewBox="0 0 17 20" fill="none" stroke="#757575" stroke-width="1.25" stroke-linecap="round" stroke-linejoin="round"><path d="M4.4 15.4H4A3.2 3.2 0 0 1 .8 12.2V4A3.2 3.2 0 0 1 4 .8h5.6a3.2 3.2 0 0 1 3 2.2"/><rect x="4.4" y="4.4" width="11.6" height="14.6" rx="3.4"/><path d="M7.8 8.6h2.4M7.8 11.5h4.800000000000001M7.8 14.4h4.800000000000001" stroke-width="1.5" stroke-linecap="butt"/></svg><svg class="abs" style="left:84px;top:12px" width="3" height="13" viewBox="0 0 3 13" fill="#1f1f1f"><circle cx="1.5" cy="1.6" r="1.05"/><circle cx="1.5" cy="6.6" r="1.05"/><circle cx="1.5" cy="11.6" r="1.05"/></svg></div>
<div class="abs" style="left:0;top:111px;width:103px;height:35px;border-bottom:1px solid #dedede"><svg class="abs" style="left:15px;top:12px" width="14" height="14" viewBox="0 0 15 15" fill="none" stroke="#4262f0" stroke-width="1.25" stroke-linecap="round" stroke-linejoin="round"><path d="M11.2 1.2l2.3 2.3-7.3 7.1-3 .8.7-3.1z"/><path d="M3.2 7.2H2.6A1.8 1.8 0 0 0 .8 9v3.2A1.8 1.8 0 0 0 2.6 14h9.3a1.8 1.8 0 0 0 1.8-1.8V8.6"/></svg><svg class="abs" style="left:45px;top:9px" width="17" height="20" viewBox="0 0 17 20" fill="none" stroke="#757575" stroke-width="1.25" stroke-linecap="round" stroke-linejoin="round"><path d="M4.4 15.4H4A3.2 3.2 0 0 1 .8 12.2V4A3.2 3.2 0 0 1 4 .8h5.6a3.2 3.2 0 0 1 3 2.2"/><rect x="4.4" y="4.4" width="11.6" height="14.6" rx="3.4"/><path d="M7.8 8.6h2.4M7.8 11.5h4.800000000000001M7.8 14.4h4.800000000000001" stroke-width="1.5" stroke-linecap="butt"/></svg><svg class="abs" style="left:84px;top:12px" width="3" height="13" viewBox="0 0 3 13" fill="#1f1f1f"><circle cx="1.5" cy="1.6" r="1.05"/><circle cx="1.5" cy="6.6" r="1.05"/><circle cx="1.5" cy="11.6" r="1.05"/></svg></div>
<div class="abs" style="left:0;top:146px;width:103px;height:35px;border-bottom:1px solid #dedede"><svg class="abs" style="left:15px;top:12px" width="14" height="14" viewBox="0 0 15 15" fill="none" stroke="#4262f0" stroke-width="1.25" stroke-linecap="round" stroke-linejoin="round"><path d="M11.2 1.2l2.3 2.3-7.3 7.1-3 .8.7-3.1z"/><path d="M3.2 7.2H2.6A1.8 1.8 0 0 0 .8 9v3.2A1.8 1.8 0 0 0 2.6 14h9.3a1.8 1.8 0 0 0 1.8-1.8V8.6"/></svg><svg class="abs" style="left:45px;top:9px" width="17" height="20" viewBox="0 0 17 20" fill="none" stroke="#757575" stroke-width="1.25" stroke-linecap="round" stroke-linejoin="round"><path d="M4.4 15.4H4A3.2 3.2 0 0 1 .8 12.2V4A3.2 3.2 0 0 1 4 .8h5.6a3.2 3.2 0 0 1 3 2.2"/><rect x="4.4" y="4.4" width="11.6" height="14.6" rx="3.4"/><path d="M7.8 8.6h2.4M7.8 11.5h4.800000000000001M7.8 14.4h4.800000000000001" stroke-width="1.5" stroke-linecap="butt"/></svg><svg class="abs" style="left:84px;top:12px" width="3" height="13" viewBox="0 0 3 13" fill="#1f1f1f"><circle cx="1.5" cy="1.6" r="1.05"/><circle cx="1.5" cy="6.6" r="1.05"/><circle cx="1.5" cy="11.6" r="1.05"/></svg></div>
<div class="abs" style="left:0;top:181px;width:103px;height:35px;border-bottom:1px solid #dedede"><svg class="abs" style="left:15px;top:12px" width="14" height="14" viewBox="0 0 15 15" fill="none" stroke="#4262f0" stroke-width="1.25" stroke-linecap="round" stroke-linejoin="round"><path d="M11.2 1.2l2.3 2.3-7.3 7.1-3 .8.7-3.1z"/><path d="M3.2 7.2H2.6A1.8 1.8 0 0 0 .8 9v3.2A1.8 1.8 0 0 0 2.6 14h9.3a1.8 1.8 0 0 0 1.8-1.8V8.6"/></svg><svg class="abs" style="left:45px;top:9px" width="17" height="20" viewBox="0 0 17 20" fill="none" stroke="#757575" stroke-width="1.25" stroke-linecap="round" stroke-linejoin="round"><path d="M4.4 15.4H4A3.2 3.2 0 0 1 .8 12.2V4A3.2 3.2 0 0 1 4 .8h5.6a3.2 3.2 0 0 1 3 2.2"/><rect x="4.4" y="4.4" width="11.6" height="14.6" rx="3.4"/><path d="M7.8 8.6h2.4M7.8 11.5h4.800000000000001M7.8 14.4h4.800000000000001" stroke-width="1.5" stroke-linecap="butt"/></svg><svg class="abs" style="left:84px;top:12px" width="3" height="13" viewBox="0 0 3 13" fill="#1f1f1f"><circle cx="1.5" cy="1.6" r="1.05"/><circle cx="1.5" cy="6.6" r="1.05"/><circle cx="1.5" cy="11.6" r="1.05"/></svg></div>
<div class="abs" style="left:0;top:216px;width:103px;height:35px;border-bottom:1px solid #dedede"><svg class="abs" style="left:15px;top:12px" width="14" height="14" viewBox="0 0 15 15" fill="none" stroke="#4262f0" stroke-width="1.25" stroke-linecap="round" stroke-linejoin="round"><path d="M11.2 1.2l2.3 2.3-7.3 7.1-3 .8.7-3.1z"/><path d="M3.2 7.2H2.6A1.8 1.8 0 0 0 .8 9v3.2A1.8 1.8 0 0 0 2.6 14h9.3a1.8 1.8 0 0 0 1.8-1.8V8.6"/></svg><svg class="abs" style="left:45px;top:9px" width="17" height="20" viewBox="0 0 17 20" fill="none" stroke="#757575" stroke-width="1.25" stroke-linecap="round" stroke-linejoin="round"><path d="M4.4 15.4H4A3.2 3.2 0 0 1 .8 12.2V4A3.2 3.2 0 0 1 4 .8h5.6a3.2 3.2 0 0 1 3 2.2"/><rect x="4.4" y="4.4" width="11.6" height="14.6" rx="3.4"/><path d="M7.8 8.6h2.4M7.8 11.5h4.800000000000001M7.8 14.4h4.800000000000001" stroke-width="1.5" stroke-linecap="butt"/></svg><svg class="abs" style="left:84px;top:12px" width="3" height="13" viewBox="0 0 3 13" fill="#1f1f1f"><circle cx="1.5" cy="1.6" r="1.05"/><circle cx="1.5" cy="6.6" r="1.05"/><circle cx="1.5" cy="11.6" r="1.05"/></svg></div>
<div class="abs" style="left:0;top:251px;width:103px;height:35px;border-bottom:1px solid #dedede"><svg class="abs" style="left:15px;top:12px" width="14" height="14" viewBox="0 0 15 15" fill="none" stroke="#4262f0" stroke-width="1.25" stroke-linecap="round" stroke-linejoin="round"><path d="M11.2 1.2l2.3 2.3-7.3 7.1-3 .8.7-3.1z"/><path d="M3.2 7.2H2.6A1.8 1.8 0 0 0 .8 9v3.2A1.8 1.8 0 0 0 2.6 14h9.3a1.8 1.8 0 0 0 1.8-1.8V8.6"/></svg><svg class="abs" style="left:45px;top:9px" width="17" height="20" viewBox="0 0 17 20" fill="none" stroke="#757575" stroke-width="1.25" stroke-linecap="round" stroke-linejoin="round"><path d="M4.4 15.4H4A3.2 3.2 0 0 1 .8 12.2V4A3.2 3.2 0 0 1 4 .8h5.6a3.2 3.2 0 0 1 3 2.2"/><rect x="4.4" y="4.4" width="11.6" height="14.6" rx="3.4"/><path d="M7.8 8.6h2.4M7.8 11.5h4.800000000000001M7.8 14.4h4.800000000000001" stroke-width="1.5" stroke-linecap="butt"/></svg><svg class="abs" style="left:84px;top:12px" width="3" height="13" viewBox="0 0 3 13" fill="#1f1f1f"><circle cx="1.5" cy="1.6" r="1.05"/><circle cx="1.5" cy="6.6" r="1.05"/><circle cx="1.5" cy="11.6" r="1.05"/></svg></div>
<div class="abs" style="left:0;top:286px;width:103px;height:35px;border-bottom:1px solid #dedede"><svg class="abs" style="left:15px;top:12px" width="14" height="14" viewBox="0 0 15 15" fill="none" stroke="#4262f0" stroke-width="1.25" stroke-linecap="round" stroke-linejoin="round"><path d="M11.2 1.2l2.3 2.3-7.3 7.1-3 .8.7-3.1z"/><path d="M3.2 7.2H2.6A1.8 1.8 0 0 0 .8 9v3.2A1.8 1.8 0 0 0 2.6 14h9.3a1.8 1.8 0 0 0 1.8-1.8V8.6"/></svg><svg class="abs" style="left:45px;top:9px" width="17" height="20" viewBox="0 0 17 20" fill="none" stroke="#757575" stroke-width="1.25" stroke-linecap="round" stroke-linejoin="round"><path d="M4.4 15.4H4A3.2 3.2 0 0 1 .8 12.2V4A3.2 3.2 0 0 1 4 .8h5.6a3.2 3.2 0 0 1 3 2.2"/><rect x="4.4" y="4.4" width="11.6" height="14.6" rx="3.4"/><path d="M7.8 8.6h2.4M7.8 11.5h4.800000000000001M7.8 14.4h4.800000000000001" stroke-width="1.5" stroke-linecap="butt"/></svg><svg class="abs" style="left:84px;top:12px" width="3" height="13" viewBox="0 0 3 13" fill="#1f1f1f"><circle cx="1.5" cy="1.6" r="1.05"/><circle cx="1.5" cy="6.6" r="1.05"/><circle cx="1.5" cy="11.6" r="1.05"/></svg></div>
<div class="abs" style="left:0;top:321px;width:103px;height:35px;border-bottom:1px solid #dedede"><svg class="abs" style="left:15px;top:12px" width="14" height="14" viewBox="0 0 15 15" fill="none" stroke="#4262f0" stroke-width="1.25" stroke-linecap="round" stroke-linejoin="round"><path d="M11.2 1.2l2.3 2.3-7.3 7.1-3 .8.7-3.1z"/><path d="M3.2 7.2H2.6A1.8 1.8 0 0 0 .8 9v3.2A1.8 1.8 0 0 0 2.6 14h9.3a1.8 1.8 0 0 0 1.8-1.8V8.6"/></svg><svg class="abs" style="left:45px;top:9px" width="17" height="20" viewBox="0 0 17 20" fill="none" stroke="#757575" stroke-width="1.25" stroke-linecap="round" stroke-linejoin="round"><path d="M4.4 15.4H4A3.2 3.2 0 0 1 .8 12.2V4A3.2 3.2 0 0 1 4 .8h5.6a3.2 3.2 0 0 1 3 2.2"/><rect x="4.4" y="4.4" width="11.6" height="14.6" rx="3.4"/><path d="M7.8 8.6h2.4M7.8 11.5h4.800000000000001M7.8 14.4h4.800000000000001" stroke-width="1.5" stroke-linecap="butt"/></svg><svg class="abs" style="left:84px;top:12px" width="3" height="13" viewBox="0 0 3 13" fill="#1f1f1f"><circle cx="1.5" cy="1.6" r="1.05"/><circle cx="1.5" cy="6.6" r="1.05"/><circle cx="1.5" cy="11.6" r="1.05"/></svg></div>
<div class="abs" style="left:0;top:356px;width:103px;height:35px;border-bottom:1px solid #dedede"><svg class="abs" style="left:15px;top:12px" width="14" height="14" viewBox="0 0 15 15" fill="none" stroke="#4262f0" stroke-width="1.25" stroke-linecap="round" stroke-linejoin="round"><path d="M11.2 1.2l2.3 2.3-7.3 7.1-3 .8.7-3.1z"/><path d="M3.2 7.2H2.6A1.8 1.8 0 0 0 .8 9v3.2A1.8 1.8 0 0 0 2.6 14h9.3a1.8 1.8 0 0 0 1.8-1.8V8.6"/></svg><svg class="abs" style="left:45px;top:9px" width="17" height="20" viewBox="0 0 17 20" fill="none" stroke="#757575" stroke-width="1.25" stroke-linecap="round" stroke-linejoin="round"><path d="M4.4 15.4H4A3.2 3.2 0 0 1 .8 12.2V4A3.2 3.2 0 0 1 4 .8h5.6a3.2 3.2 0 0 1 3 2.2"/><rect x="4.4" y="4.4" width="11.6" height="14.6" rx="3.4"/><path d="M7.8 8.6h2.4M7.8 11.5h4.800000000000001M7.8 14.4h4.800000000000001" stroke-width="1.5" stroke-linecap="butt"/></svg><svg class="abs" style="left:84px;top:12px" width="3" height="13" viewBox="0 0 3 13" fill="#1f1f1f"><circle cx="1.5" cy="1.6" r="1.05"/><circle cx="1.5" cy="6.6" r="1.05"/><circle cx="1.5" cy="11.6" r="1.05"/></svg></div>
<div class="abs" style="left:0;top:391px;width:103px;height:35px;border-bottom:1px solid #dedede"><svg class="abs" style="left:15px;top:12px" width="14" height="14" viewBox="0 0 15 15" fill="none" stroke="#4262f0" stroke-width="1.25" stroke-linecap="round" stroke-linejoin="round"><path d="M11.2 1.2l2.3 2.3-7.3 7.1-3 .8.7-3.1z"/><path d="M3.2 7.2H2.6A1.8 1.8 0 0 0 .8 9v3.2A1.8 1.8 0 0 0 2.6 14h9.3a1.8 1.8 0 0 0 1.8-1.8V8.6"/></svg><svg class="abs" style="left:45px;top:9px" width="17" height="20" viewBox="0 0 17 20" fill="none" stroke="#757575" stroke-width="1.25" stroke-linecap="round" stroke-linejoin="round"><path d="M4.4 15.4H4A3.2 3.2 0 0 1 .8 12.2V4A3.2 3.2 0 0 1 4 .8h5.6a3.2 3.2 0 0 1 3 2.2"/><rect x="4.4" y="4.4" width="11.6" height="14.6" rx="3.4"/><path d="M7.8 8.6h2.4M7.8 11.5h4.800000000000001M7.8 14.4h4.800000000000001" stroke-width="1.5" stroke-linecap="butt"/></svg><svg class="abs" style="left:84px;top:12px" width="3" height="13" viewBox="0 0 3 13" fill="#1f1f1f"><circle cx="1.5" cy="1.6" r="1.05"/><circle cx="1.5" cy="6.6" r="1.05"/><circle cx="1.5" cy="11.6" r="1.05"/></svg></div>
</div>
<div class="abs" style="left:1271px;top:71px;width:7px;height:426px;background:#fafafa"><i class="abs" style="left:0;top:20px;width:7px;height:86px;background:#e0e0e0"></i></div>
<div class="abs" style="left:0;top:0;width:1278px;height:71px;background:#f5f5f5"></div>
<div class="hc" style="left:0px;width:33px"><i class="cb16" style="top:8px"></i></div>
<div class="hc" style="left:33px;width:50px;text-align:center;padding:0"><span style="letter-spacing:-0.43px">STT</span></div>
<div class="hc" style="left:83px;width:130px"><span style="letter-spacing:-0.44px">Tình trạng dữ liệu</span></div>
<div class="hc" style="left:213px;width:180px"><span style="letter-spacing:-0.34px">Trạng thái tài sản</span></div>
<div class="hc" style="left:393px;width:170px"><span style="letter-spacing:-0.28px">Mã tài sản</span></div>
<div class="hc" style="left:563px;width:200px"><span style="letter-spacing:-0.38px">Tên tài sản</span></div>
<div class="hc" style="left:763px;width:160px;text-align:right"><span style="letter-spacing:-0.50px">Nguyên giá</span></div>
<div class="hc" style="left:923px;width:120px;text-align:right"><span style="letter-spacing:-0.88px">Số lượng</span></div>
<div class="hc" style="left:1043px;width:125px;padding-left:53px;padding-right:0;border-right:0">HM/KH lũy kế</div>
<div class="hc" style="left:1168px;width:110px;text-align:center;padding:0;border-left:1px solid #dcdcdc;border-right:0"><span style="letter-spacing:-0.82px">Chức năng</span></div>
<div class="fc" style="left:0px;width:33px;overflow:hidden"></div>
<div class="fc" style="left:33px;width:50px;overflow:hidden"></div>
<div class="fc" style="left:83px;width:130px;overflow:hidden"><div class="fi" style="left:3px;width:123px"><svg class="abs" style="right:6px;top:10px" width="9" height="5" viewBox="0 0 9 5"><path d="M.3 .3h8.4L4.5 4.7z" fill="#111"/></svg></div></div>
<div class="fc" style="left:213px;width:180px;overflow:hidden"><div class="fi" style="left:3px;width:173px"><svg class="abs" style="right:6px;top:10px" width="9" height="5" viewBox="0 0 9 5"><path d="M.3 .3h8.4L4.5 4.7z" fill="#111"/></svg></div></div>
<div class="fc" style="left:393px;width:170px;overflow:hidden"><div class="fi" style="left:3px;width:163px"><i class="abs" style="right:23px;top:0;width:1px;height:26px;background:#c8c8c8"></i><svg class="abs" style="right:4px;top:5px" width="16" height="16" viewBox="0 0 16 16" fill="none" stroke="#333" stroke-width="1.2" stroke-linejoin="round"><path d="M1.4 1.5h13.2L9.8 7.6v6.2L6.4 11.6V7.6z"/></svg></div></div>
<div class="fc" style="left:563px;width:200px;overflow:hidden"><div class="fi" style="left:3px;width:193px"><i class="abs" style="right:23px;top:0;width:1px;height:26px;background:#c8c8c8"></i><svg class="abs" style="right:4px;top:5px" width="16" height="16" viewBox="0 0 16 16" fill="none" stroke="#333" stroke-width="1.2" stroke-linejoin="round"><path d="M1.4 1.5h13.2L9.8 7.6v6.2L6.4 11.6V7.6z"/></svg></div></div>
<div class="fc" style="left:763px;width:160px;overflow:hidden"><div class="fi" style="left:3px;width:153px"><i class="abs" style="left:29px;top:0;width:1px;height:26px;background:#c8c8c8"></i><span class="abs" style="left:11px;top:4px;font-size:12px;line-height:16px;color:#333">=</span></div></div>
<div class="fc" style="left:923px;width:120px;overflow:hidden"><div class="fi" style="left:3px;width:113px"><i class="abs" style="left:29px;top:0;width:1px;height:26px;background:#c8c8c8"></i><span class="abs" style="left:11px;top:4px;font-size:12px;line-height:16px;color:#333">=</span></div></div>
<div class="fc" style="left:1043px;width:125px;border-right:0;overflow:hidden"><div class="fi" style="left:3px;width:145px"><i class="abs" style="left:29px;top:0;width:1px;height:26px;background:#c8c8c8"></i><span class="abs" style="left:11px;top:4px;font-size:12px;line-height:16px;color:#333">=</span></div></div>
<div class="fc" style="left:1168px;width:110px;border-left:1px solid #dcdcdc;border-right:0;background:#f5f5f5"></div>
<div class="abs" style="left:0;top:497px;width:1278px;height:36px;background:#f5f5f5;border-top:1px solid #dedede"></div>
<div class="c rt b" style="left:0px;top:498px;width:33px;height:35px;line-height:36px;border-color:#e6e6e6;letter-spacing:0"></div>
<div class="c rt b" style="left:33px;top:498px;width:50px;height:35px;line-height:36px;border-color:#e6e6e6;letter-spacing:0"></div>
<div class="c rt b" style="left:83px;top:498px;width:130px;height:35px;line-height:36px;border-color:#e6e6e6;letter-spacing:0"></div>
<div class="c rt b" style="left:213px;top:498px;width:180px;height:35px;line-height:36px;border-color:#e6e6e6;letter-spacing:0"></div>
<div class="c rt b" style="left:393px;top:498px;width:170px;height:35px;line-height:36px;border-color:#e6e6e6;letter-spacing:0"></div>
<div class="c rt b" style="left:563px;top:498px;width:200px;height:35px;line-height:36px;border-color:#e6e6e6;letter-spacing:0"></div>
<div class="c rt b" style="left:763px;top:498px;width:160px;height:35px;line-height:36px;border-color:#e6e6e6;letter-spacing:0"><span style="letter-spacing:0.16px">112.375.612.819 Đ</span></div>
<div class="c rt b" style="left:923px;top:498px;width:120px;height:35px;line-height:36px;border-color:#e6e6e6;letter-spacing:0"><span style="letter-spacing:0.33px">74</span></div>
<div class="c rt b" style="left:1043px;top:498px;width:125px;height:35px;line-height:36px;border-color:#e6e6e6;padding-right:3px;border-right:0;letter-spacing:0"><span style="letter-spacing:0.19px">2.090.446.613</span></div>
<div class="abs" style="left:1168px;top:498px;width:1px;height:35px;background:#e6e6e6"></div>
<div class="abs" style="left:0;top:533px;width:1278px;height:7px;background:#fcfcfc"><i class="abs" style="left:0;top:0;width:601px;height:7px;background:#dcdcdc"></i></div>
<div class="abs nw" style="left:10px;top:552px;line-height:16px"><span style="letter-spacing:-0.10px">Tổng số: <b>59</b> bản ghi</span></div>
<div class="abs nw" style="left:1010px;top:552px;line-height:16px"><span style="letter-spacing:0.08px">Số dòng/trang</span></div>
<div class="abs nw" style="left:1104px;top:552px;line-height:16px"><span style="letter-spacing:-0.40px">100</span></div>
<svg class="abs" style="left:1131px;top:556px" width="11" height="8" viewBox="0 0 11 8" fill="none" stroke="#111" stroke-width="2" stroke-linecap="round" stroke-linejoin="round"><path d="M1.5 1.6l4 4 4-4"/></svg>
<div class="abs nw" style="left:1174px;top:552px;line-height:16px;color:#8a8a8a;font-size:12px">&lt;</div>
<div class="abs nw" style="left:1191px;top:552px;line-height:16px"><span style="letter-spacing:-0.15px">Trang</span></div>
<div class="abs nw b" style="left:1238px;top:552px;line-height:16px">1</div>
<div class="abs nw" style="left:1261px;top:552px;line-height:16px;color:#8a8a8a;font-size:12px">&gt;</div>
<div class="abs" style="left:0;top:577px;width:1278px;height:4px;border-top:1px solid #bdbdbd;border-bottom:1px solid #bdbdbd;background:#fff"></div>
<div class="abs nw" style="left:16px;top:588px;line-height:16px;font-size:14px;letter-spacing:-.45px;color:#4262f0"><span style="letter-spacing:-0.48px">Lịch sử biến động</span></div>
<div class="abs" style="left:16px;top:611px;width:104px;height:2px;background:#4262f0"></div>
<div class="abs nw" style="left:152px;top:588px;line-height:16px;font-size:14px;letter-spacing:-.45px"><span style="letter-spacing:-0.53px">Thông tin kê khai</span></div>
<div class="abs nw" style="left:282px;top:588px;line-height:16px;font-size:14px;letter-spacing:-.45px"><span style="letter-spacing:-0.66px">Tệp đính kèm</span></div>
<div class="abs" style="left:1252px;top:589px;width:16px;height:16px;border-radius:50%;background:#ececec"><svg class="abs" style="left:4px;top:5px" width="8" height="6" viewBox="0 0 8 6" fill="none" stroke="#4262f0" stroke-width="1.5" stroke-linecap="round" stroke-linejoin="round"><path d="M1 1.2l3 3 3-3"/></svg></div>
<div class="abs" style="left:0;top:614px;width:1278px;height:35px;background:#f5f5f5"></div>
<div class="hc" style="left:0px;top:614px;width:60px;text-align:center;padding:0"><span style="letter-spacing:-0.53px">STT</span></div>
<div class="c ct" style="left:0px;top:649px;width:60px;height:36px;line-height:38px;border-bottom:1px solid #dedede">1</div>
<div class="hc" style="left:60px;top:614px;width:120px"><span style="letter-spacing:-0.67px">Số chứng từ</span></div>
<div class="c " style="left:60px;top:649px;width:120px;height:36px;line-height:38px;border-bottom:1px solid #dedede"></div>
<div class="hc" style="left:180px;top:614px;width:150px;text-align:center;padding:0"><span style="letter-spacing:-0.60px">Ngày chứng từ</span></div>
<div class="c ct" style="left:180px;top:649px;width:150px;height:36px;line-height:38px;border-bottom:1px solid #dedede"><span style="letter-spacing:0.47px">01/01/2023</span></div>
<div class="hc" style="left:330px;top:614px;width:150px;text-align:center;padding:0"><span style="letter-spacing:-0.38px">Ngày biến động</span></div>
<div class="c ct" style="left:330px;top:649px;width:150px;height:36px;line-height:38px;border-bottom:1px solid #dedede"><span style="letter-spacing:0.47px">01/01/2023</span></div>
<div class="hc" style="left:480px;top:614px;width:150px"><span style="letter-spacing:-0.55px">Nội dung</span></div>
<div class="c " style="left:480px;top:649px;width:150px;height:36px;line-height:38px;border-bottom:1px solid #dedede"><span style="letter-spacing:-0.10px">Cập nhật loại tài sản t...</span></div>
<div class="hc" style="left:630px;top:614px;width:150px;text-align:right"><span style="letter-spacing:-0.45px">Nguyên giá</span></div>
<div class="c " style="left:630px;top:649px;width:150px;height:36px;line-height:38px;border-bottom:1px solid #dedede"></div>
<div class="hc" style="left:780px;top:614px;width:150px;text-align:right"><span style="letter-spacing:-0.46px">Số tiền thực hiện</span></div>
<div class="c " style="left:780px;top:649px;width:150px;height:36px;line-height:38px;border-bottom:1px solid #dedede"></div>
<div class="hc" style="left:930px;top:614px;width:150px;text-align:right"><span style="letter-spacing:-0.19px">Giá trị HM/KH</span></div>
<div class="c " style="left:930px;top:649px;width:150px;height:36px;line-height:38px;border-bottom:1px solid #dedede"></div>
<div class="hc" style="left:1080px;top:614px;width:109px;padding-left:61px;padding-right:0;border-right:0">HM/KH lũy kế</div>
<div class="c " style="left:1080px;top:649px;width:109px;height:36px;line-height:38px;border-bottom:1px solid #dedede;border-right:0"></div>
<div class="hc" style="left:1189px;top:614px;width:89px;text-align:center;padding:0;border-left:1px solid #dcdcdc;border-right:0"><span style="letter-spacing:-0.76px">Chức năng</span></div>
<div class="c" style="left:1189px;top:649px;width:89px;height:36px;line-height:38px;border-left:1px solid #dedede;border-right:0;border-bottom:1px solid #dedede;padding:0 0 0 3px;color:#4262f0;font-size:14px"><span style="letter-spacing:-0.59px">Hủy cập nhật</span></div>
<div class="abs" style="left:0;top:730px;width:1278px;height:7px;background:#fcfcfc"><i class="abs" style="left:0;top:0;width:1107px;height:7px;background:#dcdcdc"></i></div>
</div>
<div class="abs" style="left:1566px;top:306px;width:20px;height:90px;border-radius:6px 0 0 6px;background:#4262f0;box-shadow:-1px 1px 4px rgba(0,0,0,.35)"><svg class="abs" style="left:5px;top:39px" width="7" height="12" viewBox="0 0 7 12" fill="none" stroke="#fff" stroke-width="1.4" stroke-linecap="round" stroke-linejoin="round"><path d="M5.4 1.6L1.6 6l3.8 4.4"/></svg></div>
<!-- ================= OVERLAY + MODAL ================= -->
<div class="abs" style="left:0;top:0;width:1582px;height:850px;background:rgba(0,0,0,.4)"></div>
<div id="modal">
  <svg class="abs" style="left:35px;top:45px" width="36" height="32" viewBox="0 0 36 32">
    <path d="M15.6 1.2 Q18 -1.8 20.4 1.2 L35.4 27.4 Q36.6 31.4 33 31.4 H3 Q-.6 31.4 .8 27.4 Z" fill="#ffc107"/>
    <rect x="16.5" y="10.6" width="3" height="10.8" rx="1.5" fill="#fff"/><circle cx="18" cy="25.2" r="1.9" fill="#fff"/>
  </svg>
  <div class="msg">
    <div class="ln"><span style="letter-spacing:-0.18px">Tài sản</span> <b><span style="letter-spacing:-0.46px">Máy photocopy Ha Noi Vip - Máy photocopy</span></b></div>
    <div class="ln"><b><span style="letter-spacing:0.38px">2511</span></b> <span style="letter-spacing:-0.03px">đã phát sinh chứng từ trong năm</span> <b><span style="letter-spacing:0.11px">2023</span></b></div>
    <div class="ln"><span style="letter-spacing:-0.15px">Để thực hiện được chức năng này, vui lòng xóa tài sản</span></div>
    <div class="ln"><b><span style="letter-spacing:-0.39px">Máy photocopy Ha Noi Vip - Máy photocopy 2511</span></b> <span style="letter-spacing:0.27px">trong</span></div>
    <div class="ln"><span style="letter-spacing:-0.11px">các chứng từ sau:</span></div>
  </div>
  <div class="mt">
    <div class="mh" style="left:0;width:100px"><span style="letter-spacing:0.05px">Ngày CT</span></div>
    <div class="mh" style="left:100px;width:110px"><span style="letter-spacing:-0.26px">Số CT</span></div>
    <div class="mh" style="left:210px;width:163px;border-right:0"><span style="letter-spacing:0.26px">Loại chứng từ</span></div>
    <div class="mc" style="left:0;width:100px"><span style="letter-spacing:0.49px">01/01/2023</span></div>
    <div class="mc" style="left:100px;width:110px;color:#1a5cf0;font-weight:700"><span style="letter-spacing:-0.17px">DGL000036</span></div>
    <div class="mc" style="left:210px;width:163px;border-right:0"><span style="letter-spacing:-0.04px">Đánh giá lại</span></div>
  </div>
  <div class="close"><span style="letter-spacing:-1.20px">Đóng</span></div>
</div>
</body>
</html>
